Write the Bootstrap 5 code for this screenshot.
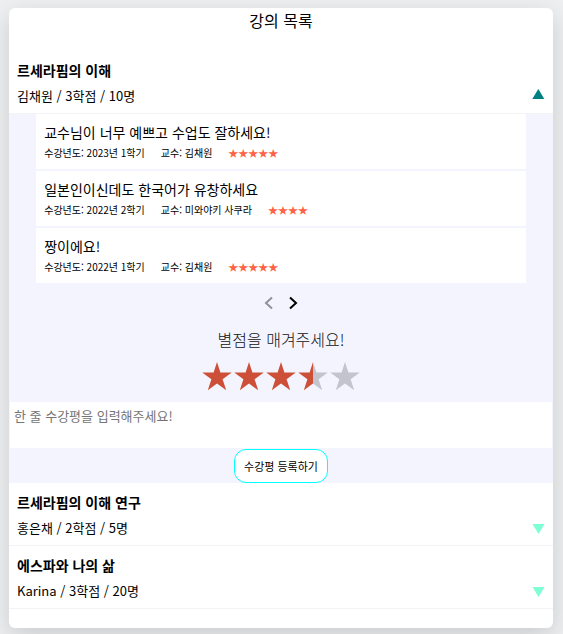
<!DOCTYPE html>
<html lang="ko">
<head>
<meta charset="utf-8">
<meta name="viewport" content="width=device-width, initial-scale=1">
<title>강의 목록</title>
<link rel="stylesheet" href="https://cdn.jsdelivr.net/npm/bootstrap@5.3.0/dist/css/bootstrap.min.css">
<style>
body { background: #eeeff1; color: #000; font-family: "Noto Sans CJK KR", sans-serif; font-size: 16px; line-height: 24px; }
.sheet { border-radius: 6px; box-shadow: 0 8px 24px rgba(0, 0, 0, .15); margin: 8px 10px 6px 9px; padding-bottom: 19px; }
.sheet-title { font-size: 16px; line-height: 24px; margin-bottom: 19px; }
.course { border-bottom: 1px solid #f3f3f5; padding: 7px 8px 4px; }
.course-name { font-size: 14px; line-height: 24px; }
.course-info { font-size: 13px; line-height: 27px; }
.fold { color: aquamarine; line-height: 0; margin-bottom: 5px; }
.fold[aria-expanded="true"] { color: teal; }
.detail { background: #f4f4ff; }
.reviews { width: 90%; gap: 2px; }
.review { padding: 8px 8px 6px; }
.review-text { font-size: 14px; line-height: 20px; }
.review-meta { font-size: 10px; line-height: 21px; gap: 16px; }
.review-stars { color: tomato; }
.pager { padding: 12px 0; gap: 8px; }
.pager button { line-height: 0; }
.pager button:disabled { opacity: .4; }
.rate-title { color: #111; font-size: 16px; font-weight: 300; line-height: 32px; }
.rating { padding: 5px 0 10px; }
.rating label { color: #c4c4ce; line-height: 0; }
.rating label.on { color: #cd4f38; }
.comment { border: solid #f4f4ff; border-width: 0 1px; height: 46px; font-size: 13px; line-height: 19px; padding: 4px; resize: none; outline: 0; }
.comment::placeholder { color: #757575; }
.submit { border: 1px solid aqua; border-radius: 12px; font-size: 11px; line-height: 16px; padding: 8px 9px; margin-top: 1px; color: #000; }
</style>
</head>
<body>
<svg class="d-none" aria-hidden="true">
  <symbol id="tri-down" viewBox="0 0 13 16"><path fill="currentColor" d="M.5 4h12l-6 10z"/></symbol>
  <symbol id="tri-up" viewBox="0 0 13 16"><path fill="currentColor" d="M.3 11h12l-6-10z"/></symbol>
  <symbol id="star-l" viewBox="0 0 16 32"><path fill="currentColor" d="M16 2v21.400L6.800 30.300l3.600-11L1.200 12.600h11.400z"/></symbol>
  <symbol id="star-r" viewBox="0 0 16 32"><path fill="currentColor" d="M0 2v21.400l9.200 6.900-3.600-11 9.200-6.700H3.400z"/></symbol>
</svg>
<main class="sheet bg-white overflow-hidden">
  <h1 class="sheet-title text-center fw-normal">강의 목록</h1>

  <section>
    <div class="course d-flex justify-content-between align-items-end">
      <div>
        <h2 class="course-name fw-bold m-0">르세라핌의 이해</h2>
        <p class="course-info m-0">김채원 / 3학점 / 10명</p>
      </div>
      <button type="button" class="fold btn border-0 p-0" aria-expanded="true" aria-controls="detail" aria-label="접기"><svg width="13" height="16"><use href="#tri-up"/></svg></button>
    </div>
    <div id="detail" class="detail">
      <div class="reviews d-flex flex-column mx-auto">
        <article class="review bg-white">
          <p class="review-text m-0">교수님이 너무 예쁘고 수업도 잘하세요!</p>
          <div class="review-meta d-flex"><span>수강년도: 2023년 1학기</span><span>교수: 김채원</span><span class="review-stars">★★★★★</span></div>
        </article>
        <article class="review bg-white">
          <p class="review-text m-0">일본인이신데도 한국어가 유창하세요</p>
          <div class="review-meta d-flex"><span>수강년도: 2022년 2학기</span><span>교수: 미와야키 사쿠라</span><span class="review-stars">★★★★</span></div>
        </article>
        <article class="review bg-white">
          <p class="review-text m-0">짱이에요!</p>
          <div class="review-meta d-flex"><span>수강년도: 2022년 1학기</span><span>교수: 김채원</span><span class="review-stars">★★★★★</span></div>
        </article>
      </div>
      <div class="pager d-flex justify-content-center">
        <button type="button" class="btn border-0 p-0" disabled aria-label="이전"><svg width="16" height="16" fill="none" stroke="#000" stroke-width="2"><path d="M11 2.500L5 8l6 5.500"/></svg></button>
        <button type="button" class="btn border-0 p-0" aria-label="다음"><svg width="16" height="16" fill="none" stroke="#000" stroke-width="2"><path d="M5 2.500L11 8l-6 5.500"/></svg></button>
      </div>
      <form>
        <fieldset>
          <legend class="rate-title text-center m-0">별점을 매겨주세요!</legend>
          <div class="rating position-relative d-flex justify-content-center">
            <input class="btn-check" type="radio" name="rate" id="r1"><label class="on" for="r1" aria-label="0.5점"><svg width="16" height="32"><use href="#star-l"/></svg></label>
            <input class="btn-check" type="radio" name="rate" id="r2"><label class="on" for="r2" aria-label="1점"><svg width="16" height="32"><use href="#star-r"/></svg></label>
            <input class="btn-check" type="radio" name="rate" id="r3"><label class="on" for="r3" aria-label="1.5점"><svg width="16" height="32"><use href="#star-l"/></svg></label>
            <input class="btn-check" type="radio" name="rate" id="r4"><label class="on" for="r4" aria-label="2점"><svg width="16" height="32"><use href="#star-r"/></svg></label>
            <input class="btn-check" type="radio" name="rate" id="r5"><label class="on" for="r5" aria-label="2.5점"><svg width="16" height="32"><use href="#star-l"/></svg></label>
            <input class="btn-check" type="radio" name="rate" id="r6"><label class="on" for="r6" aria-label="3점"><svg width="16" height="32"><use href="#star-r"/></svg></label>
            <input class="btn-check" type="radio" name="rate" id="r7" checked><label class="on" for="r7" aria-label="3.5점"><svg width="16" height="32"><use href="#star-l"/></svg></label>
            <input class="btn-check" type="radio" name="rate" id="r8"><label for="r8" aria-label="4점"><svg width="16" height="32"><use href="#star-r"/></svg></label>
            <input class="btn-check" type="radio" name="rate" id="r9"><label for="r9" aria-label="4.5점"><svg width="16" height="32"><use href="#star-l"/></svg></label>
            <input class="btn-check" type="radio" name="rate" id="r10"><label for="r10" aria-label="5점"><svg width="16" height="32"><use href="#star-r"/></svg></label>
          </div>
        </fieldset>
        <textarea class="comment d-block w-100 bg-white" aria-label="수강평" placeholder="한 줄 수강평을 입력해주세요!"></textarea>
        <div class="d-flex justify-content-center">
          <button type="button" class="submit bg-white">수강평 등록하기</button>
        </div>
      </form>
    </div>
  </section>

  <section class="course d-flex justify-content-between align-items-end">
    <div>
      <h2 class="course-name fw-bold m-0">르세라핌의 이해 연구</h2>
      <p class="course-info m-0">홍은채 / 2학점 / 5명</p>
    </div>
    <button type="button" class="fold btn border-0 p-0" aria-expanded="false" aria-label="펼치기"><svg width="13" height="16"><use href="#tri-down"/></svg></button>
  </section>
  <section class="course d-flex justify-content-between align-items-end">
    <div>
      <h2 class="course-name fw-bold m-0">에스파와 나의 삶</h2>
      <p class="course-info m-0">Karina / 3학점 / 20명</p>
    </div>
    <button type="button" class="fold btn border-0 p-0" aria-expanded="false" aria-label="펼치기"><svg width="13" height="16"><use href="#tri-down"/></svg></button>
  </section>
</main>
<script src="https://cdn.jsdelivr.net/npm/bootstrap@5.3.0/dist/js/bootstrap.bundle.min.js"></script>
</body>
</html>
